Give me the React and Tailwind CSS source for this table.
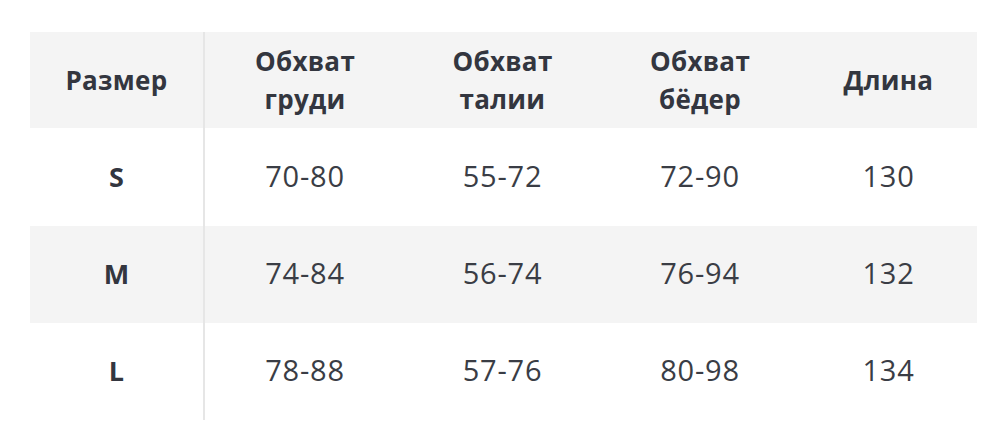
import React from "react";

const rows = [
  { size: "S", cells: ["70-80", "55-72", "72-90", "130"], bg: "bg-white", h: "h-[98px]" },
  { size: "M", cells: ["74-84", "56-74", "76-94", "132"], bg: "bg-[#f4f4f4]", h: "h-[97px]" },
  { size: "L", cells: ["78-88", "57-76", "80-98", "134"], bg: "bg-white", h: "h-[97px]" },
];

const colW = ["w-[175px]", "w-[200px]", "w-[195px]", "w-[200px]", "w-[177px]"];

export default function App() {
  return (
    <div className="w-[1000px] h-[433px] bg-white pt-[32px] pl-[30px]" style={{ fontFamily: '"Open Sans", sans-serif' }}>
      <div className="w-[947px] flex flex-col">
        <div className="flex h-[96px] bg-[#f4f4f4] text-[#33363f] font-bold text-[26px] leading-[38px] tracking-[0.3px]">
          <div className={`${colW[0]} flex items-center justify-center border-r-2 border-[#e6e6e6]`}>Размер</div>
          <div className={`${colW[1]} flex items-center justify-center text-center`}>Обхват<br />груди</div>
          <div className={`${colW[2]} flex items-center justify-center text-center`}>Обхват<br />талии</div>
          <div className={`${colW[3]} flex items-center justify-center text-center`}>Обхват<br />бёдер</div>
          <div className={`${colW[4]} flex items-center justify-center`}>Длина</div>
        </div>
        {rows.map((r) => (
          <div key={r.size} className={`flex ${r.h} ${r.bg}`}>
            <div className={`${colW[0]} flex items-center justify-center border-r-2 border-[#e6e6e6] font-bold text-[27px] text-[#33363f]`}>{r.size}</div>
            {r.cells.map((c, i) => (
              <div key={i} className={`${colW[i + 1]} flex items-center justify-center pb-[3px] text-[29px] tracking-[0.8px] text-[#3a3d45]`}>{c}</div>
            ))}
          </div>
        ))}
      </div>
    </div>
  );
}
